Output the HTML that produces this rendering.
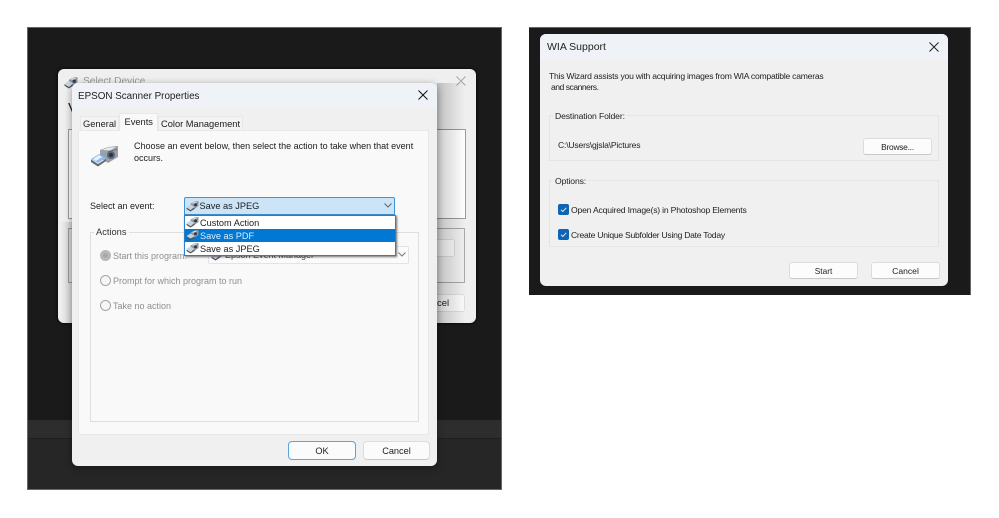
<!DOCTYPE html>
<html><head><meta charset="utf-8"><style>
html,body{margin:0;padding:0;background:#fff}
body{width:999px;height:518px;position:relative;overflow:hidden;font-family:"Liberation Sans",sans-serif;color:#1c1c1c;filter:blur(.3px)}
div,span{position:absolute;box-sizing:border-box;white-space:nowrap}
svg{position:absolute;overflow:visible}
.t{font-size:9px;line-height:12px}
.tab{font-size:9.3px;line-height:12px}
.d{font-size:9.200px;line-height:12px}
.w{font-size:8.6px;line-height:12px;letter-spacing:-.12px;color:#222}
.dis{color:#8f8f8f}
.btn{background:#fbfbfb;border:1px solid #dcdcdc;border-bottom-color:#c8c8c8;border-radius:3px;text-align:center;font-size:9.2px;line-height:17px;color:#222}
.radio{width:11px;height:11px;border:1px solid #a5a5a5;border-radius:50%;background:#f6f6f6}
.grp{border:1px solid #dedede}
.cb{width:11px;height:11px;background:#0f64b4;border-radius:2px}
</style></head><body>
<svg width="0" height="0" style="position:absolute"><defs>
<g id="sc">
<path d="M4 3.500 8 1.500 12 1 12 6 7 9.500 4 7.500Z" fill="#8f959b"/>
<path d="M5 3.500 8 2 11 1.700 8 3.500Z" fill="#dfe4e9"/>
<circle cx="9" cy="4.800" r="1.500" fill="#2f3b49"/>
<path d="M0 7 4 4.500 8 7 4 9.500Z" fill="#c5d4e2"/>
<path d="M0 7.500 4 10 8 7.500 8 9 4 11.500 0 9Z" fill="#4f545b"/>
</g>
</defs></svg>

<!-- left dark panel -->
<div style="left:27px;top:27px;width:475px;height:463px;background:#1a1a1a;border:1px solid #666"></div>
<div style="left:28px;top:420px;width:473px;height:18px;background:#2d2d2d"></div>
<div style="left:28px;top:438px;width:473px;height:1px;background:#1e1e1e"></div>
<div style="left:28px;top:439px;width:473px;height:50px;background:#262626"></div>

<!-- back dialog -->
<div style="left:58px;top:69px;width:418px;height:254px;background:#efefef;border-radius:6px;box-shadow:0 0 3px #000"></div>
<svg style="left:64px;top:76px" width="14" height="13" viewBox="0 0 12 12"><use href="#sc"/></svg>
<div style="left:83px;top:76px;color:#9a9a9a;font-size:10.2px;line-height:12px">Select Device</div>
<svg style="left:456px;top:76px" width="10" height="10"><path d="M.5.5l9 9M9.5.5l-9 9" stroke="#a5a5a5" stroke-width="1"/></svg>
<div style="left:68px;top:129px;width:10px;height:90px;background:#fff;border:1px solid #9a9a9a;border-right:0"></div>
<div style="left:68px;top:100px;font-size:15px;line-height:18px;color:#222">V</div>
<div style="left:437px;top:129px;width:29px;height:90px;background:#fff;border:1px solid #9a9a9a;border-left:0"></div>
<div style="left:68px;top:228px;width:10px;height:55px;border:1px solid #a8a8a8;border-right:0"></div>
<div style="left:437px;top:228px;width:28px;height:55px;border:1px solid #a8a8a8;border-left:0"></div>
<div style="left:437px;top:239px;width:18px;height:18px;background:#fbfbfb;border:1px solid #ddd;border-left:0;border-radius:0 3px 3px 0"></div>
<div style="left:437px;top:294px;width:28px;height:18px;background:#fbfbfb;border:1px solid #ddd;border-left:0;border-radius:0 3px 3px 0"></div>
<div class="t" style="left:437px;top:298px;color:#222;font-size:9.5px">cel</div>
<div style="left:437px;top:83px;width:28px;height:240px;background:linear-gradient(90deg,rgba(0,0,0,.2),rgba(0,0,0,0))"></div>
<div style="left:60px;top:222px;width:12px;height:101px;background:linear-gradient(270deg,rgba(0,0,0,.12),rgba(0,0,0,0))"></div>

<!-- front dialog -->
<div style="left:72px;top:83px;width:365px;height:383px;background:#f0f0f0;border-radius:6px;box-shadow:0 2px 8px rgba(0,0,0,.4);overflow:hidden">
  <div style="left:0;top:0;width:365px;height:25px;background:#eff3f8"></div>
</div>
<div style="left:78px;top:90px;font-size:9.85px;line-height:13px;color:#1c1c1c">EPSON Scanner Properties</div>
<svg style="left:418px;top:90px" width="10" height="10"><path d="M.5.5l9 9M9.5.5l-9 9" stroke="#111" stroke-width="1"/></svg>

<div style="left:78px;top:130px;width:351px;height:305px;background:#f9f9f9;border:1px solid #e8e8e8"></div>
<div style="left:80px;top:116px;width:39px;height:14px;background:#f3f3f3;border:1px solid #e8e8e8;border-bottom:0"></div>
<div style="left:119px;top:113px;width:39px;height:18px;background:#f9f9f9;border:1px solid #e8e8e8;border-bottom:0"></div>
<div style="left:158px;top:116px;width:85px;height:14px;background:#f3f3f3;border:1px solid #e8e8e8;border-bottom:0"></div>
<div class="tab" style="left:83px;top:118px">General</div>
<div class="tab" style="left:124.500px;top:116px">Events</div>
<div class="tab" style="left:161px;top:118px">Color Management</div>

<svg style="left:90px;top:144px" width="29" height="23" viewBox="0 0 29 23">
<path d="M10 6 18 3 28 2 28 13 18 19 10 14Z" fill="#9aa0a6"/>
<path d="M12 6 18 3.500 26 3 20 6.500Z" fill="#e6eaee"/>
<path d="M18 7 27 5 27 6 18 8Z" fill="#6d747b"/>
<circle cx="21" cy="11" r="4" fill="#5b6672"/><circle cx="21" cy="11" r="2" fill="#22364f"/>
<path d="M1 15 9 10 16 14 8 19Z" fill="#8dbcec"/>
<path d="M3 15 9 11 12 13 6 17Z" fill="#e8f2fb"/>
<path d="M1 15.500 8 20 16 15 16 17 8 22.500 1 18Z" fill="#62676e"/></svg>
<div class="t" style="left:134px;top:141px;line-height:11.500px">Choose an event below, then select the action to take when that event<br>occurs.</div>
<div class="t" style="left:90px;top:200px">Select an event:</div>

<!-- Actions group -->
<div class="grp" style="left:90px;top:232px;width:329px;height:190px"></div>
<div class="t" style="left:94px;top:226px;background:#f9f9f9;padding:0 2px;color:#333;font-size:9.300px">Actions</div>
<div class="radio" style="left:100px;top:250px;border:3px solid #b8b8b8;background:#b8b8b8"></div>
<div style="left:103px;top:253px;width:5px;height:5px;border-radius:50%;background:#a8a8a8"></div>
<div class="t dis" style="left:113px;top:250px">Start this program:</div>
<div style="left:208px;top:246px;width:201px;height:18px;background:#fbfbfb;border:1px solid #e3e3e3;border-radius:2px"></div>
<svg style="left:211px;top:249px" width="13" height="12" viewBox="0 0 12 12"><use href="#sc"/></svg>
<div class="t" style="left:225px;top:249px;color:#555">Epson Event Manager</div>
<svg style="left:398px;top:252px" width="8" height="5"><path d="M.5.5l3.500 3.500 3.500-3.500" stroke="#777" fill="none"/></svg>
<div class="radio" style="left:100px;top:275px"></div>
<div class="t dis" style="left:113px;top:275px">Prompt for which program to run</div>
<div class="radio" style="left:100px;top:300px"></div>
<div class="t dis" style="left:113px;top:300px">Take no action</div>

<!-- combo -->
<div style="left:184px;top:197px;width:211px;height:18px;background:#cce4f7;border:1px solid #3f93d8;border-radius:2px 2px 0 0"></div>
<svg style="left:186px;top:200px" width="13" height="12" viewBox="0 0 12 12"><use href="#sc"/></svg>
<div class="d" style="left:199.500px;top:200px">Save as JPEG</div>
<svg style="left:384px;top:203px" width="8" height="5"><path d="M.5.5l3.500 3.500 3.500-3.500" stroke="#5c6670" fill="none"/></svg>
<!-- dropdown -->
<div style="left:184px;top:215px;width:212px;height:41px;background:#fff;border:1px solid #2a7fc9;box-shadow:1px 1px 2px rgba(0,0,0,.55)"></div>
<div style="left:185px;top:229px;width:210px;height:13px;background:#0078d4"></div>
<svg style="left:186px;top:216px" width="13" height="12" viewBox="0 0 12 12"><use href="#sc"/></svg>
<svg style="left:186px;top:229px" width="13" height="12" viewBox="0 0 12 12"><use href="#sc"/></svg>
<svg style="left:186px;top:242px" width="13" height="12" viewBox="0 0 12 12"><use href="#sc"/></svg>
<div class="d" style="left:200px;top:216.500px">Custom Action</div>
<div class="d" style="left:200px;top:229.500px;color:#dcecfa">Save as PDF</div>
<div class="d" style="left:200px;top:242.500px">Save as JPEG</div>

<div class="btn" style="left:288px;top:441px;width:68px;height:19px;border:1px solid #5aa3dc;border-radius:4px;line-height:18px">OK</div>
<div class="btn" style="left:363px;top:441px;width:67px;height:19px;border-radius:4px;line-height:18px">Cancel</div>

<!-- right panel -->
<div style="left:529px;top:27px;width:442px;height:268px;background:#1a1a1a;border-top:1px solid #666;border-right:1px solid #666"></div>
<div style="left:540px;top:34px;width:408px;height:252px;background:#f0f0f0;border-radius:6px;overflow:hidden">
  <div style="left:0;top:0;width:408px;height:26px;background:#eff3f8"></div>
</div>
<div style="left:547px;top:41px;font-size:10.5px;line-height:13px;color:#222">WIA Support</div>
<svg style="left:929px;top:42px" width="10" height="10"><path d="M.5.5l9 9M9.5.5l-9 9" stroke="#222" stroke-width="1"/></svg>
<div class="w" style="left:549px;top:70px;letter-spacing:-.245px">This Wizard assists you with acquiring images from WIA compatible cameras</div>
<div class="w" style="left:551px;top:81px;letter-spacing:-.5px">and scanners.</div>

<div class="grp" style="left:549px;top:115px;width:390px;height:46px;border-color:#e4e4e4"></div>
<div class="w" style="left:553px;top:110px;background:#f0f0f0;padding:0 2px">Destination Folder:</div>
<div class="w" style="left:558px;top:139px;letter-spacing:-.2px">C:\Users\gjsla\Pictures</div>
<div class="btn" style="left:863px;top:138px;width:69px;height:17px;font-size:8.4px;line-height:16px;letter-spacing:-.25px;background:#fcfcfc">Browse...</div>

<div class="grp" style="left:549px;top:180px;width:390px;height:67px;border-color:#e4e4e4"></div>
<div class="w" style="left:553px;top:175px;background:#f0f0f0;padding:0 2px">Options:</div>
<div class="cb" style="left:558px;top:204px"></div>
<svg style="left:558px;top:204px" width="11" height="11"><path d="M3 5.800l1.800 1.700 3.500-3.700" stroke="#d5e8f8" fill="none" stroke-width="1"/></svg>
<div class="w" style="left:571px;top:204px;letter-spacing:-.19px">Open Acquired Image(s) in Photoshop Elements</div>
<div class="cb" style="left:558px;top:229px"></div>
<svg style="left:558px;top:229px" width="11" height="11"><path d="M3 5.800l1.800 1.700 3.500-3.700" stroke="#d5e8f8" fill="none" stroke-width="1"/></svg>
<div class="w" style="left:571px;top:229px;letter-spacing:-.27px">Create Unique Subfolder Using Date Today</div>

<div class="btn" style="left:789px;top:262px;width:69px;height:17px;font-size:8.3px;line-height:16px;background:#fcfcfc">Start</div>
<div class="btn" style="left:871px;top:262px;width:69px;height:17px;font-size:8.6px;line-height:16px;background:#fcfcfc">Cancel</div>
</body></html>
